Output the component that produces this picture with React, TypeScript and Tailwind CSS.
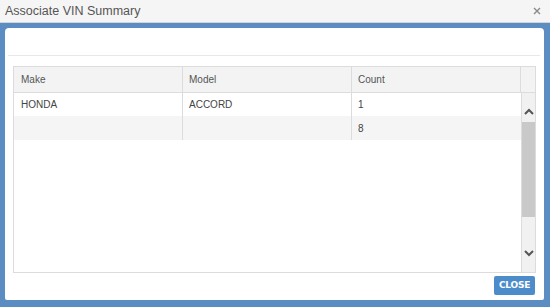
import React from "react";

type Row = { make: string; model: string; count: string };

const rows: Row[] = [
  { make: "HONDA", model: "ACCORD", count: "1" },
  { make: "", model: "", count: "8" },
];

const Chevron: React.FC<{ up?: boolean }> = ({ up }) => (
  <svg width="10" height="7" viewBox="0 0 10 7" className="block">
    <path
      d={up ? "M1 6 L5 2 L9 6" : "M1 1 L5 5 L9 1"}
      fill="none"
      stroke="#555"
      strokeWidth="2"
    />
  </svg>
);

const App: React.FC = () => {
  return (
    <div className="w-[550px] h-[307px] flex flex-col bg-[#5b8dc3] font-['Liberation_Sans',Arial,sans-serif]">
      {/* タイトルバー */}
      <div className="h-[23px] shrink-0 flex items-center justify-between bg-[#f5f5f5] border-b border-[#d4d4d4] pl-[5px] pr-[9px]">
        <span className="text-[12.5px] text-[#555]">Associate VIN Summary</span>
        <svg width="8" height="8" viewBox="0 0 8 8">
          <path d="M1 1 L7 7 M7 1 L1 7" stroke="#8a8a8a" strokeWidth="1.4" />
        </svg>
      </div>

      <div className="flex-1 flex pl-[5px] pr-[6px] pt-[5px] pb-[7px]">
        <div className="flex-1 flex flex-col bg-white rounded-t-[4px] rounded-b-[2px]">
          <div className="h-[28px] shrink-0 mx-[3px] mr-[4px] border-b border-[#e8e8e8]" />

          {/* テーブル */}
          <div className="mt-[10px] mx-[8px] h-[207px] flex flex-col border border-[#dcdcdc] text-[10px]">
            <div className="h-[26px] shrink-0 flex bg-[#f3f3f3] border-b border-[#dcdcdc] text-[#555]">
              <div className="w-[169px] flex items-center pl-[7px] border-r border-[#dcdcdc]">Make</div>
              <div className="w-[169px] flex items-center pl-[6px] border-r border-[#dcdcdc]">Model</div>
              <div className="w-[169px] flex items-center pl-[6px] border-r border-[#dcdcdc]">Count</div>
              <div className="flex-1" />
            </div>

            <div className="flex-1 flex">
              <div className="w-[507px] flex flex-col text-[#444]">
                {rows.map((r, i) => (
                  <div
                    key={i}
                    className={`h-[23px] flex ${i % 2 === 1 ? "bg-[#f5f5f5] h-[24px]" : "bg-white"}`}
                  >
                    <div className="w-[169px] flex items-center pl-[7px] border-r border-[#dcdcdc]">{r.make}</div>
                    <div className="w-[169px] flex items-center pl-[6px] border-r border-[#dcdcdc]">{r.model}</div>
                    <div className="w-[169px] flex items-center pl-[6px]">{r.count}</div>
                  </div>
                ))}
              </div>

              {/* スクロールバー */}
              <div className="flex-1 flex flex-col bg-[#f1f1f1] border-l border-[#dcdcdc]">
                <div className="h-[29px] shrink-0 flex items-center justify-center pt-[7px]">
                  <Chevron up />
                </div>
                <div className="h-[95px] shrink-0 bg-[#c9c9c9]" />
                <div className="flex-1" />
                <div className="h-[36px] shrink-0 flex items-center justify-center pb-[2px]">
                  <Chevron />
                </div>
              </div>
            </div>
          </div>

          <div className="mt-[3px] flex justify-end pr-[9px]">
            <button className="w-[41px] h-[19px] rounded-[2px] bg-[#4d8ccb] text-white text-[9px] font-bold font-['DejaVu_Sans',sans-serif] tracking-tight">
              CLOSE
            </button>
          </div>
        </div>
      </div>
    </div>
  );
};

export default App;
